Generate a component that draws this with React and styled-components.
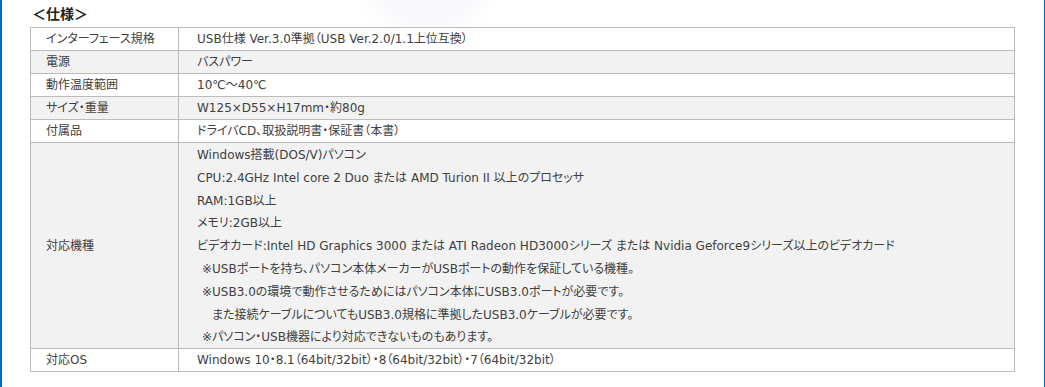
import styled, { createGlobalStyle } from "styled-components";

const GlobalStyle = createGlobalStyle`
  html, body {
    margin: 0;
    padding: 0;
    background: #ffffff;
  }
`;

const specs = [
  { label: "インターフェース規格", value: "USB仕様 Ver.3.0準拠（USB Ver.2.0/1.1上位互換）" },
  { label: "電源", value: "バスパワー" },
  { label: "動作温度範囲", value: "10℃～40℃" },
  { label: "サイズ・重量", value: "W125×D55×H17mm・約80g" },
  { label: "付属品", value: "ドライバCD、取扱説明書・保証書（本書）" },
];

const machines = [
  { text: "Windows搭載(DOS/V)パソコン", indent: 0 },
  { text: "CPU:2.4GHz Intel core 2 Duo または AMD Turion II 以上のプロセッサ", indent: 0 },
  { text: "RAM:1GB以上", indent: 0 },
  { text: "メモリ:2GB以上", indent: 0 },
  {
    text: "ビデオカード:Intel HD Graphics 3000 または ATI Radeon HD3000シリーズ または Nvidia Geforce9シリーズ以上のビデオカード",
    indent: 0,
  },
  { text: "※USBポートを持ち、パソコン本体メーカーがUSBポートの動作を保証している機種。", indent: 5 },
  { text: "※USB3.0の環境で動作させるためにはパソコン本体にUSB3.0ポートが必要です。", indent: 5 },
  { text: "また接続ケーブルについてもUSB3.0規格に準拠したUSB3.0ケーブルが必要です。", indent: 15 },
  { text: "※パソコン・USB機器により対応できないものもあります。", indent: 5 },
];

export default function App() {
  return (
    <>
      <GlobalStyle />
      <Page>
        <Title>＜仕様＞</Title>
        <SpecTable>
          <tbody>
            {specs.map((row, i) => (
              <Row key={row.label} $shaded={i % 2 === 1}>
                <Label>{row.label}</Label>
                <Value>{row.value}</Value>
              </Row>
            ))}
            <Row $shaded>
              <Label>対応機種</Label>
              <Value>
                <Lines>
                  {machines.map((line) => (
                    <Line key={line.text} $indent={line.indent}>
                      {line.text}
                    </Line>
                  ))}
                </Lines>
              </Value>
            </Row>
            <Row>
              <Label>対応OS</Label>
              <Value>Windows 10・8.1（64bit/32bit）・8（64bit/32bit）・7（64bit/32bit）</Value>
            </Row>
          </tbody>
        </SpecTable>
      </Page>
    </>
  );
}

const Page = styled.div`
  box-sizing: border-box;
  width: 1045px;
  height: 387px;
  border-left: 2px solid #0066cc;
  border-right: 1px solid #0066cc;
  padding: 3px 0 0 28px;
  background: radial-gradient(
    ellipse 70px 45px at 425px -5px,
    #f6f7fb 0%,
    #f9f9fc 60%,
    rgba(255, 255, 255, 0) 100%
  );
  font-family: "DejaVu Sans", "Noto Sans CJK JP", sans-serif;
  font-feature-settings: "palt";
  color: #404040;
`;

const Title = styled.h2`
  margin: 0 0 3px 2px;
  font-family: "Noto Sans CJK JP", sans-serif;
  font-size: 14px;
  line-height: 21px;
  font-weight: 700;
  color: #222222;
`;

const SpecTable = styled.table`
  width: 985px;
  border-collapse: collapse;
  font-size: 12px;
`;

const Row = styled.tr`
  background: ${(p) => (p.$shaded ? "#f2f2f2" : "#ffffff")};
`;

const Label = styled.td`
  width: 132px;
  padding: 0 0 0 15px;
  border: 1px solid #bbbbbb;
  line-height: 22px;
  vertical-align: middle;
  white-space: nowrap;
`;

const Value = styled.td`
  padding: 0 0 0 18px;
  border: 1px solid #bbbbbb;
  line-height: 22px;
  vertical-align: middle;
  white-space: nowrap;
`;

const Lines = styled.div`
  padding-top: 1px;
  margin-bottom: -1px;
`;

const Line = styled.div`
  line-height: 22.8px;
  padding-left: ${(p) => p.$indent}px;
`;
